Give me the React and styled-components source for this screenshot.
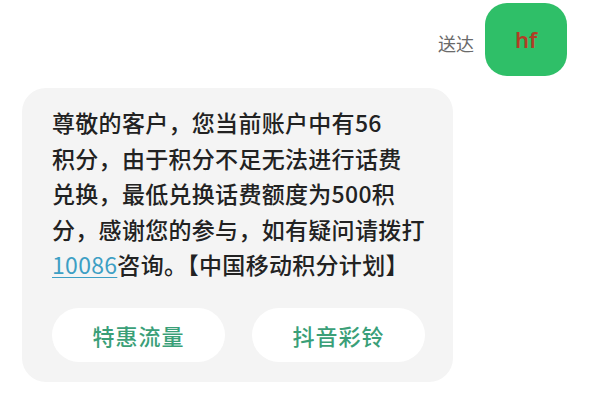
import React from "react";
import styled, { createGlobalStyle } from "styled-components";

const GlobalStyle = createGlobalStyle`
  html, body {
    margin: 0;
    padding: 0;
    background: #ffffff;
  }
  body {
    font-family: "Noto Sans CJK SC", "Noto Sans", sans-serif;
  }
`;

const StPage = styled.div`
  width: 600px;
  height: 400px;
  overflow: hidden;
  display: flex;
  flex-direction: column;
`;

const StSentRow = styled.div`
  display: flex;
  justify-content: flex-end;
  align-items: center;
  padding: 3px 33px 0 0;
  gap: 11px;
`;

const StStatus = styled.span`
  font-size: 18px;
  color: #6a6a6a;
  margin-top: 6px;
`;

const StSentBubble = styled.div`
  width: 82px;
  height: 73px;
  border-radius: 22px;
  background: #2fbf68;
  display: flex;
  align-items: center;
  justify-content: center;
  font-family: "Noto Sans", "Liberation Sans", sans-serif;
  font-size: 22px;
  font-weight: 600;
  color: #b23c25;
  padding-bottom: 2px;
  box-sizing: border-box;
`;

const StReceivedBubble = styled.div`
  margin: 12px 0 0 22px;
  width: 431px;
  box-sizing: border-box;
  background: #f4f4f4;
  border-radius: 24px;
  padding: 17px 0 20px 30px;
`;

const StMessage = styled.div`
  font-size: 23px;
  font-weight: 500;
  line-height: 35.5px;
  color: #222222;
  letter-spacing: 0.3px;
`;

const StLink = styled.span`
  color: #3d9fc4;
  font-weight: 400;
  text-decoration: underline;
  text-decoration-thickness: 1px;
  text-underline-offset: 3px;
`;

const StActions = styled.div`
  display: flex;
  gap: 27px;
  margin-top: 25px;
`;

const StAction = styled.button`
  width: 173px;
  height: 54px;
  border: none;
  border-radius: 27px;
  background: #ffffff;
  color: #3a9f78;
  font-family: "Noto Sans CJK SC", sans-serif;
  font-size: 22px;
  font-weight: 500;
  letter-spacing: 1px;
  padding: 0;
`;

export default function App() {
  return (
    <StPage>
      <GlobalStyle />
      <StSentRow>
        <StStatus>送达</StStatus>
        <StSentBubble>hf</StSentBubble>
      </StSentRow>
      <StReceivedBubble>
        <StMessage>
          尊敬的客户，您当前账户中有56
          <br />
          积分，由于积分不足无法进行话费
          <br />
          兑换，最低兑换话费额度为500积
          <br />
          分，感谢您的参与，如有疑问请拨打
          <br />
          <StLink>10086</StLink>咨询。【中国移动积分计划】
        </StMessage>
        <StActions>
          <StAction>特惠流量</StAction>
          <StAction>抖音彩铃</StAction>
        </StActions>
      </StReceivedBubble>
    </StPage>
  );
}
